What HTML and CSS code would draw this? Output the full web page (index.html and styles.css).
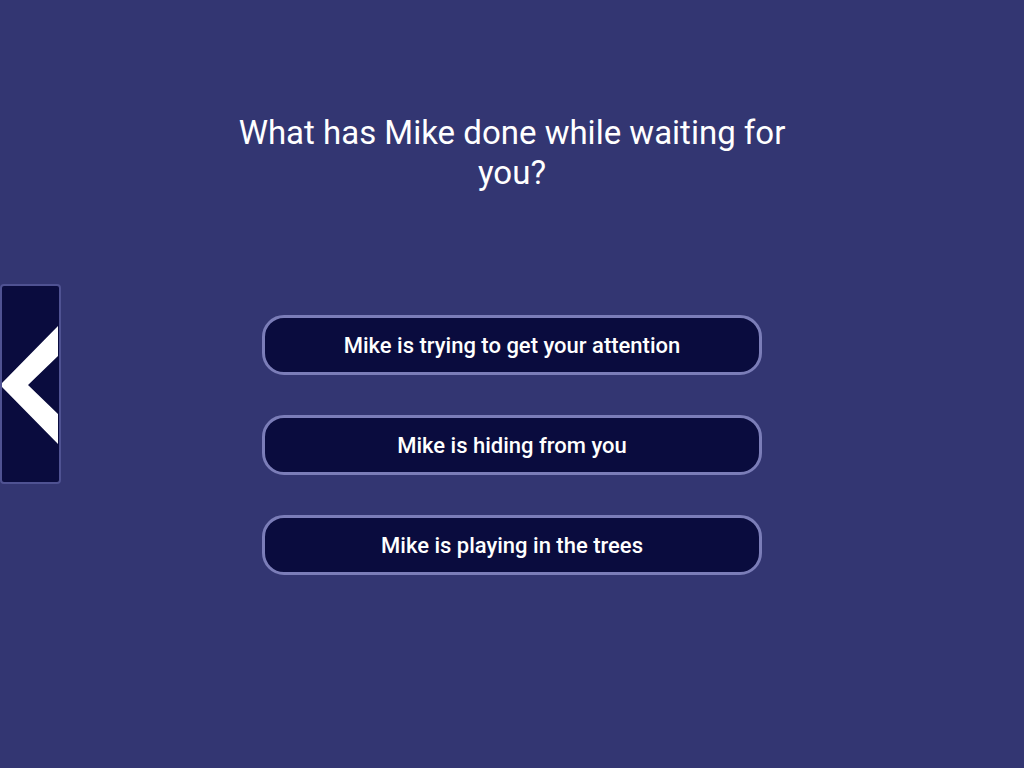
FILE: index.html
```html
<!DOCTYPE html>
<html>
<head>
<meta charset="utf-8">
<link rel="stylesheet" href="styles.css">
</head>
<body>
<button class="back" aria-label="Back">
  <svg width="58" height="198" viewBox="0 0 58 198">
    <polygon points="0,99 58,40 58,70 28,99 58,128 58,158" fill="#ffffff"/>
  </svg>
</button>
<main class="quiz">
  <h1 class="question">What has Mike done while waiting for you?</h1>
  <div class="options">
    <button class="option">Mike is trying to get your attention</button>
    <button class="option">Mike is hiding from you</button>
    <button class="option">Mike is playing in the trees</button>
  </div>
</main>
</body>
</html>
```
FILE: styles.css
```css
html, body {
  margin: 0;
  padding: 0;
  height: 100%;
}
body {
  background: #333672;
  font-family: Roboto, "Noto Sans", sans-serif;
  color: #ffffff;
  overflow: hidden;
}
.quiz {
  display: flex;
  flex-direction: column;
  align-items: center;
  padding-top: 113px;
}
.question {
  margin: 0;
  width: 570px;
  text-align: center;
  font-size: 33px;
  font-weight: 400;
  line-height: 40px;
}
.options {
  margin-top: 122px;
  display: flex;
  flex-direction: column;
  gap: 40px;
}
.option {
  width: 500px;
  height: 60px;
  box-sizing: border-box;
  border: 3px solid #7b7db8;
  border-radius: 22px;
  background: #0a0c3e;
  color: #ffffff;
  font-family: Roboto, "Noto Sans", sans-serif;
  font-size: 22px;
  font-weight: 500;
  padding: 0;
}
.back {
  position: absolute;
  left: 0;
  top: 284px;
  width: 61px;
  height: 200px;
  box-sizing: border-box;
  padding: 0;
  margin: 0;
  border: 2px solid #4f5292;
  border-radius: 4px;
  background: #0a0c3e;
  overflow: hidden;
  display: block;
}
.back svg {
  display: block;
  position: absolute;
  left: -2px;
  top: 0;
}
```
